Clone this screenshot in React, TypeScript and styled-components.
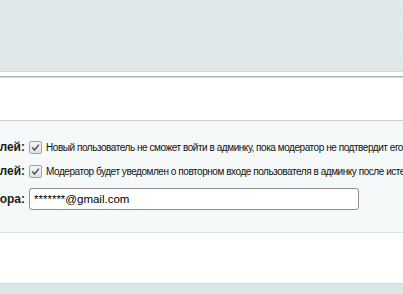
import styled, { createGlobalStyle } from 'styled-components';

const GlobalStyle = createGlobalStyle`
  html, body {
    margin: 0;
    padding: 0;
    background: #ffffff;
    overflow: hidden;
  }
  body {
    font-family: 'Liberation Sans', Arial, sans-serif;
  }
`

const Page = styled.div`
  width: 403px;
  height: 294px;
  overflow: hidden;
  display: flex;
  flex-direction: column;
  background: #ffffff;
`

const TopBar = styled.div`
  height: 71px;
  flex-shrink: 0;
  background-color: #dfe7e9;
  background-image: radial-gradient(rgba(255, 255, 255, 0.25) 1px, transparent 1px);
  background-size: 3px 3px;
  border-bottom: 1px solid #cfd8da;
`

const TopRule = styled.div`
  height: 4px;
  flex-shrink: 0;
  background: #ffffff;
  border-bottom: 1px solid #aab3b5;
  box-shadow: 0 1px 0 #d3dadc;
  margin-bottom: 1px;
`

const WhiteSpace = styled.div<{ $h: number }>`
  height: ${p => p.$h}px;
  flex-shrink: 0;
`

const Panel = styled.div`
  flex-shrink: 0;
  background: #f5f9f9;
  border-top: 1px solid #c9d0d2;
  border-bottom: 1px solid #dbe2e4;
  padding: 14px 0 21px;
  display: flex;
  flex-direction: column;
`

const Row = styled.div<{ $top?: number }>`
  height: 24px;
  display: flex;
  align-items: center;
  gap: 4px;
  margin-top: ${p => p.$top || 0}px;
  white-space: nowrap;
`

const Label = styled.div`
  width: 25px;
  flex-shrink: 0;
  display: flex;
  justify-content: flex-end;
  font-size: 12px;
  font-weight: 700;
  color: #1c1c1c;
`

const Check = styled.span`
  width: 13px;
  height: 13px;
  flex-shrink: 0;
  box-sizing: border-box;
  border: 1px solid #9ea3a5;
  border-radius: 2px;
  background: linear-gradient(#f7f7f7, #dfe2e3);
  display: flex;
  align-items: center;
  justify-content: center;
`

const Hint = styled.span`
  font-size: 10px;
  letter-spacing: -0.45px;
  color: #111111;
`

const Field = styled.div`
  width: 330px;
  height: 22px;
  box-sizing: border-box;
  border: 1px solid #8e9192;
  border-radius: 3px;
  background: #ffffff;
  padding: 0 4px;
  display: flex;
  align-items: center;
  font-size: 11.5px;
  color: #000000;
`

const BottomBar = styled.div`
  flex: 1;
  background-color: #dde6e8;
  border-top: 1px solid #d2dbdd;
`

const Tick = () => (
  <svg width="9" height="9" viewBox="0 0 9 9">
    <path d="M1.2 4.6 L3.5 7 L7.9 1.6" fill="none" stroke="#4f5456" strokeWidth="1.5" />
  </svg>
)

const App = () => {
  return (
    <Page>
      <GlobalStyle />
      <TopBar />
      <TopRule />
      <WhiteSpace $h={42} />
      <Panel>
        <Row>
          <Label>Подтверждение регистрации пользователей:</Label>
          <Check><Tick /></Check>
          <Hint>Новый пользователь не сможет войти в админку, пока модератор не подтвердит его регистрацию</Hint>
        </Row>
        <Row>
          <Label>Уведомлять о повторном входе пользователей:</Label>
          <Check><Tick /></Check>
          <Hint>Модератор будет уведомлен о повторном входе пользователя в админку после истечения срока</Hint>
        </Row>
        <Row $top={4}>
          <Label>E-mail модератора:</Label>
          <Field>*******@gmail.com</Field>
        </Row>
      </Panel>
      <WhiteSpace $h={50} />
      <BottomBar />
    </Page>
  );
};

export default App;
